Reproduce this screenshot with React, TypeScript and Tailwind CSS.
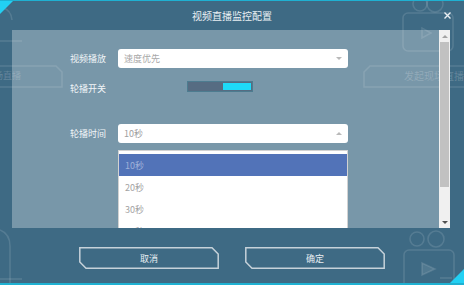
import React from "react";

const intervals = ["10秒", "20秒", "30秒", "40秒"];

function Caret({ up = false }: { up?: boolean }) {
  return up ? (
    <span className="h-0 w-0 border-x-[3px] border-b-[3px] border-x-transparent border-b-[#b9b9b9]" />
  ) : (
    <span className="h-0 w-0 border-x-[3px] border-t-[3px] border-x-transparent border-t-[#b9b9b9]" />
  );
}

function FrameButton({ label }: { label: string }) {
  return (
    <button className="relative flex h-[22px] w-[140px] items-center justify-center text-[9px] leading-none text-[#e8eef2]">
      <svg className="absolute inset-0" width="140" height="22" viewBox="0 0 140 22">
        <polygon
          points="0.8,0.8 133,0.8 139.2,7 139.2,21.2 7,21.2 0.8,15"
          fill="none"
          stroke="#c6d2da"
          strokeWidth="1.5"
        />
      </svg>
      <span className="relative">{label}</span>
    </button>
  );
}

// faint page that sits behind the modal
function PageBehind() {
  return (
    <div className="pointer-events-none absolute inset-0">
      <svg className="absolute inset-0" width="464" height="285" viewBox="0 0 464 285" fill="none" stroke="rgba(255,255,255,0.12)" strokeWidth="1.6">
        <path d="M3 8 Q11 10 12 20" />
        <path d="M0 41 H22" />
        <path d="M-4 66 H56 L62 72 V87 H-4" />
        <path d="M470 66 H370 L364 72 V87 H470" />
        <circle cx="420" cy="4" r="7" />
        <circle cx="435" cy="4" r="8" />
        <rect x="403" y="13" width="50" height="38" rx="5" />
        <path d="M422 28 V38 L431 33 Z" />
        <circle cx="417" cy="239" r="7" />
        <circle cx="436" cy="239" r="8" />
        <rect x="404" y="250" width="50" height="45" rx="5" />
        <path d="M422 263 V275 L435 269 Z" fill="rgba(255,255,255,0.1)" />
        <path d="M440 278 H452" />
        <path d="M0 230 Q10 234 10 246 V285" />
        <path d="M0 279 H22" />
      </svg>
      <span className="absolute left-[-6px] top-[71px] text-[9px] leading-none text-white/20">场直播</span>
      <span className="absolute left-[404px] top-[71px] text-[10px] leading-none text-white/20">发起现场直播</span>
    </div>
  );
}

export default function App() {
  return (
    <div className="relative h-[285px] w-[464px] overflow-hidden bg-[#3e6a84] font-['Noto_Sans_CJK_SC',sans-serif]">
      <PageBehind />

      <div className="relative flex h-full flex-col border-t border-b-2 border-[#1fb1d2]">
        {/* corner marks */}
        <span className="pointer-events-none absolute left-0 top-0 h-0 w-0 border-r-[13px] border-t-[13px] border-r-transparent border-t-[#22d0f3]" />
        <span className="pointer-events-none absolute bottom-0 right-0 h-0 w-0 border-b-[14px] border-l-[14px] border-b-[#22d0f3] border-l-transparent" />

        {/* header */}
        <div className="flex h-[29px] items-center">
          <div className="w-[33px]" />
          <div className="flex-1 text-center text-[10px] leading-none text-[#e9eff3]">视频直播监控配置</div>
          <div className="flex w-[33px] items-center justify-center">
            <svg width="7" height="7" viewBox="0 0 7 7" stroke="#e9eff3" strokeWidth="1.4">
              <path d="M0.5 0.5 L6.5 6.5 M6.5 0.5 L0.5 6.5" />
            </svg>
          </div>
        </div>

        {/* body */}
        <div className="ml-[12px] mr-[14px] flex h-[198px]">
          <div className="relative flex-1 overflow-hidden bg-white/30">
            <div className="flex flex-col pt-[19px] text-[9px] leading-none">
              <div className="flex h-[19px] items-center">
                <span className="w-[94px] text-right text-[#f1f5f8]">视频播放</span>
                <div className="ml-[12px] flex h-full w-[230px] items-center justify-between rounded-[3px] bg-white pl-[6px] pr-[6px]">
                  <span className="text-[#a8a8a8]">速度优先</span>
                  <Caret />
                </div>
              </div>

              <div className="mt-[13px] flex h-[11px] items-center">
                <span className="w-[94px] pt-[3px] text-right text-[#f1f5f8]">轮播开关</span>
                <div className="ml-[81px] flex h-[11px] w-[66px] justify-end border border-[#4d7c90] bg-[#566c82] p-px">
                  <div className="w-[28px] bg-[#1edbf8]" />
                </div>
              </div>

              <div className="mt-[32px] flex h-[19px] items-center">
                <span className="w-[94px] text-right text-[#f1f5f8]">轮播时间</span>
                <div className="relative ml-[12px] h-full w-[230px]">
                  <div className="flex h-full items-center justify-between rounded-[3px] bg-white pl-[6px] pr-[6px]">
                    <span className="text-[#a0a0a0]">10秒</span>
                    <Caret up />
                  </div>
                  <ul className="absolute left-0 top-[26px] w-full border border-[#d2d2d2] bg-white pt-[3px]">
                    {intervals.map((v, i) => (
                      <li
                        key={v}
                        className={
                          i === 0
                            ? "flex h-[22px] items-center bg-[#5273b8] px-[6px] text-[#9fb1d9]"
                            : "flex h-[22px] items-center px-[6px] text-[#a3a3a3]"
                        }
                      >
                        {v}
                      </li>
                    ))}
                  </ul>
                </div>
              </div>
            </div>
          </div>

          {/* scrollbar */}
          <div className="flex w-[11px] flex-col bg-[#f0f0f0]">
            <div className="flex h-[12px] items-center justify-center">
              <span className="h-0 w-0 border-x-[3px] border-b-[3px] border-x-transparent border-b-[#a3a3a3]" />
            </div>
            <div className="mx-px h-[145px] bg-[#c1c1c1]" />
            <div className="flex-1" />
            <div className="flex h-[12px] items-center justify-center">
              <span className="h-0 w-0 border-x-[3px] border-t-[3px] border-x-transparent border-t-[#505050]" />
            </div>
          </div>
        </div>

        {/* footer */}
        <div className="flex flex-1 justify-center gap-[26px] pt-[19px]">
          <FrameButton label="取消" />
          <FrameButton label="确定" />
        </div>
      </div>
    </div>
  );
}
